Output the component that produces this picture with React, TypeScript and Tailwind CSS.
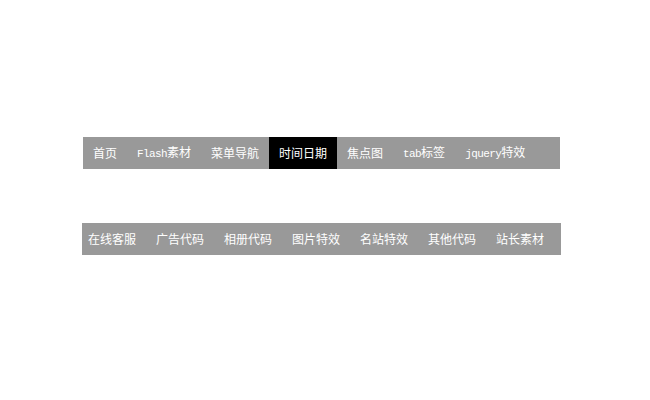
const topItems: { label: [string, string]; active?: boolean }[] = [
  { label: ['', '首页'] },
  { label: ['Flash', '素材'] },
  { label: ['', '菜单导航'] },
  { label: ['', '时间日期'], active: true },
  { label: ['', '焦点图'] },
  { label: ['tab', '标签'] },
  { label: ['jquery', '特效'] },
];

const bottomItems = ['在线客服', '广告代码', '相册代码', '图片特效', '名站特效', '其他代码', '站长素材'];

function Label({ latin, cjk }: { latin: string; cjk: string }) {
  return (
    <span className="whitespace-nowrap">
      {latin && (
        <span className="font-['Liberation_Mono',monospace] text-[11px] tracking-[-0.6px]">{latin}</span>
      )}
      {cjk}
    </span>
  );
}

export default function App() {
  return (
    <div className="w-[650px] h-[400px] bg-white font-['Noto_Sans_CJK_SC',sans-serif] text-[12px] text-white pt-[137px] pl-[83px]">
      {/* first menu */}
      <div className="w-[477px] h-[32px] bg-[#999999] flex">
        {topItems.map((item, i) => (
          <div
            key={i}
            className={
              'h-full px-[10px] flex items-center leading-none ' + (item.active ? 'bg-black' : '')
            }
          >
            <Label latin={item.label[0]} cjk={item.label[1]} />
          </div>
        ))}
      </div>

      {/* second menu */}
      <div className="mt-[54px] -ml-px w-[479px] h-[32px] bg-[#999999] flex items-center pl-[6px] gap-[20px] leading-none">
        {bottomItems.map((t) => (
          <span key={t} className="whitespace-nowrap">
            {t}
          </span>
        ))}
      </div>
    </div>
  );
}
